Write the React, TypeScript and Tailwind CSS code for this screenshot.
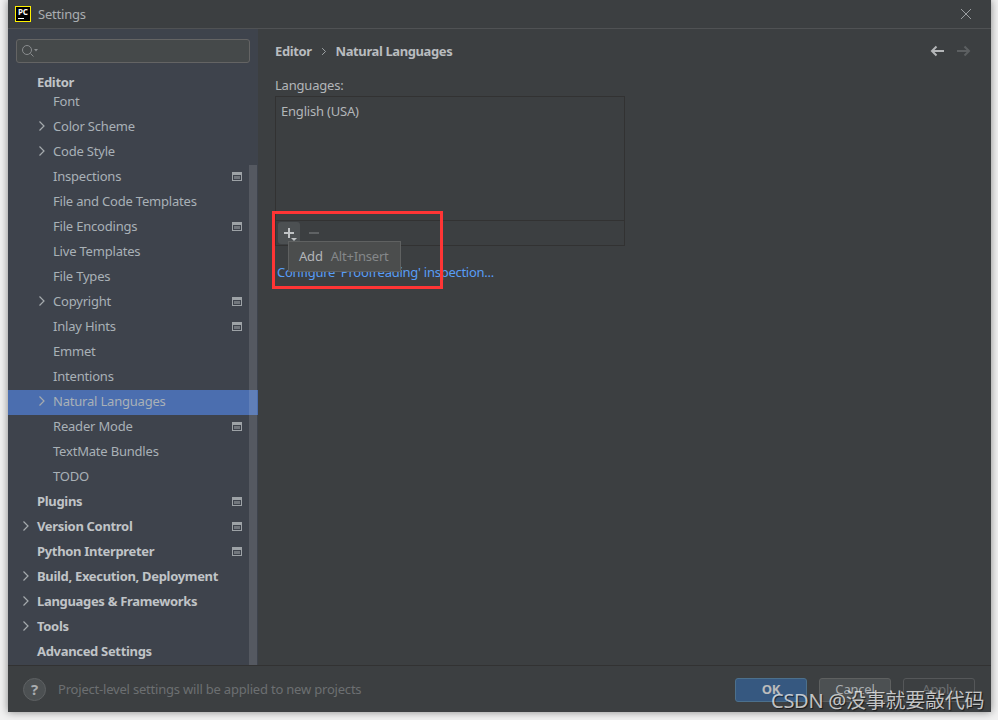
import React from "react";

type Row = {
  label: string;
  bold?: boolean;
  child?: boolean;
  arrow?: boolean;
  project?: boolean;
  selected?: boolean;
};

const rows: Row[] = [
  { label: "Color Scheme", child: true, arrow: true },
  { label: "Code Style", child: true, arrow: true },
  { label: "Inspections", child: true, project: true },
  { label: "File and Code Templates", child: true },
  { label: "File Encodings", child: true, project: true },
  { label: "Live Templates", child: true },
  { label: "File Types", child: true },
  { label: "Copyright", child: true, arrow: true, project: true },
  { label: "Inlay Hints", child: true, project: true },
  { label: "Emmet", child: true },
  { label: "Intentions", child: true },
  { label: "Natural Languages", child: true, arrow: true, selected: true },
  { label: "Reader Mode", child: true, project: true },
  { label: "TextMate Bundles", child: true },
  { label: "TODO", child: true },
  { label: "Plugins", bold: true, project: true },
  { label: "Version Control", bold: true, arrow: true, project: true },
  { label: "Python Interpreter", bold: true, project: true },
  { label: "Build, Execution, Deployment", bold: true, arrow: true },
  { label: "Languages & Frameworks", bold: true, arrow: true },
  { label: "Tools", bold: true, arrow: true },
  { label: "Advanced Settings", bold: true },
];

const Chevron = ({ className }: { className?: string }) => (
  <svg viewBox="0 0 8 12" className={className} fill="none" stroke="currentColor" strokeWidth="1.2">
    <path d="M1.5 1.5 6 6l-4.5 4.5" />
  </svg>
);

const ProjectIcon = () => (
  <svg viewBox="0 0 10 9" className="w-[10px] h-[9px] text-[#9da2a6]">
    <path fill="currentColor" fillRule="evenodd" d="M0 0h10v9H0zM1 3v5h8V3z" />
    <rect x="2" y="4" width="6" height="3" fill="currentColor" opacity="0.55" />
  </svg>
);

const TreeRow = ({ row }: { row: Row }) => (
  <div
    className={`h-[25px] pb-[2px] flex items-center relative ${
      row.selected ? "bg-[#4b6eaf]" : ""
    } ${row.child ? "pl-[45px]" : "pl-[29px]"}`}
  >
    {row.arrow && (
      <Chevron
        className={`absolute top-[5px] w-2 h-3 text-[#a6abae] ${row.child ? "left-[30px]" : "left-[14px]"}`}
      />
    )}
    <span className={row.bold ? "font-bold tracking-[-0.32px] text-[#c0c4c7]" : "text-[#a9b1b7]"}>{row.label}</span>
    {row.project && (
      <span className="absolute left-[224px] top-[7px] flex">
        <ProjectIcon />
      </span>
    )}
  </div>
);

const Button = ({ label, className }: { label: string; className: string }) => (
  <div className={`w-[72px] h-6 rounded-[3px] border flex items-center justify-center ${className}`}>{label}</div>
);

export default function App() {
  return (
    <div
      className="w-[998px] h-[720px] bg-[#f1f1f1] pl-2 pr-[7px] pb-2 overflow-hidden relative text-[13px] tracking-[-0.2px] leading-none"
      style={{ fontFamily: '"Noto Sans", "Liberation Sans", sans-serif' }}
    >
      <div className="h-full flex flex-col bg-[#3c3f41] shadow-[0_0_8px_rgba(0,0,0,0.45)]">
        {/* title bar */}
        <div className="h-[29px] shrink-0 flex items-center pl-[7px] pr-[19px] border-b border-[#505254] text-[#a9adb0]">
          <div className="w-4 h-4 border border-[#fff200] bg-black flex flex-col items-start pl-[2px] pt-[1px] mr-[7px]">
            <span className="text-[8px] leading-[8px] font-bold text-white">PC</span>
            <span className="w-[6px] h-px bg-white mt-[2px]" />
          </div>
          <span>Settings</span>
          <svg viewBox="0 0 12 12" className="w-3 h-3 ml-auto text-[#9a9da0]" fill="none" stroke="currentColor">
            <path d="m1 1 10 10M11 1 1 11" />
          </svg>
        </div>

        {/* body */}
        <div className="flex-1 flex min-h-0">
          <aside className="w-[250px] shrink-0 bg-[#3e434c] relative overflow-hidden">
            <div className="mx-2 mt-[10px] h-6 w-[234px] bg-[#45494a] border border-[#646464] rounded-[3px] flex items-center pl-1 text-[#8a8d8f]">
              <svg viewBox="0 0 18 14" className="w-[18px] h-[14px]" fill="none" stroke="currentColor">
                <circle cx="6" cy="6" r="4.5" />
                <path d="m9.5 9.5 3 3" />
                <path d="M13 5h4l-2 2.5z" fill="currentColor" stroke="none" />
              </svg>
            </div>
            <div className="mt-[9px] h-[20px] flex items-center pl-[29px] font-bold tracking-[-0.32px] text-[#c0c4c7]">Editor</div>
            <div className="h-[19px] flex items-center pl-[45px] text-[#a9b1b7]">Font</div>
            <div className="mt-[4px]">
              {rows.map((row) => (
                <TreeRow key={row.label} row={row} />
              ))}
            </div>
            <div className="absolute right-px top-[136px] bottom-0 w-2 bg-[#ffffff1f]" />
          </aside>

          <main className="flex-1 pl-[17px] pr-[20px] pt-[14px] text-[#b3b6b9]">
            <div className="h-4 flex items-center font-bold tracking-[-0.4px] text-[#b9bcbf]">
              <span>Editor</span>
              <Chevron className="w-[6px] h-[9px] mx-[9px] text-[#a6abae]" />
              <span>Natural Languages</span>
              <svg viewBox="0 0 14 12" className="w-[14px] h-3 ml-auto text-[#b4b6b8]" fill="none" stroke="currentColor" strokeWidth="2">
                <path d="M14 6H2M6.5 1.5 2 6l4.5 4.5" />
              </svg>
              <svg viewBox="0 0 14 12" className="w-[14px] h-3 ml-[13px] text-[#5c5f61]" fill="none" stroke="currentColor" strokeWidth="2">
                <path d="M0 6h12M7.5 1.5 12 6l-4.5 4.5" />
              </svg>
            </div>
            <div className="mt-[18px] h-4 flex items-center">Languages:</div>
            <div className="mt-[3px] w-[350px] h-[150px] border border-[#323232] flex flex-col">
              <div className="flex-1 pl-[5px] pt-[8px]">English (USA)</div>
              <div className="h-[25px] border-t border-[#323232] flex items-center pl-[2px] gap-[9px]">
                <div className="w-[22px] h-[22px] rounded-[3px] bg-[#4c5052] relative flex items-center justify-center">
                  <svg viewBox="0 0 10 10" className="w-[10px] h-[10px] text-[#c0c3c5]" fill="none" stroke="currentColor" strokeWidth="2">
                    <path d="M5 0v10M0 5h10" />
                  </svg>
                </div>
                <span className="w-[10px] h-[2px] bg-[#5f6264]" />
              </div>
            </div>
            <div className="mt-[20px] ml-[2px] tracking-[-0.26px] text-[#589df6]">Configure 'Proofreading' inspection...</div>
          </main>
        </div>

        {/* footer */}
        <div className="h-[47px] shrink-0 border-t border-[#323232] flex items-center pl-[15px] pr-[16px] pt-[1px]">
          <div className="w-[23px] h-[23px] rounded-full bg-[#4c5052] border border-[#5e6163] flex items-center justify-center font-bold text-[15px] text-[#a9adb0]">
            ?
          </div>
          <span className="ml-[12px] text-[#6c6f71]">Project-level settings will be applied to new projects</span>
          <div className="ml-auto flex gap-3">
            <Button label="OK" className="bg-[#365880] border-[#4c708c] text-[#bbbbbb] font-bold" />
            <Button label="Cancel" className="bg-[#4c5052] border-[#5e6060] text-[#a9adb0]" />
            <Button label="Apply" className="border-[#555759] text-[#6c6f71]" />
          </div>
        </div>
      </div>

      {/* tooltip */}
      <div className="absolute left-[288px] top-[241px] w-[113px] h-[31px] bg-[#4b4d4d] border border-[#5f6161] flex items-center pl-[10px] z-10">
        <span className="text-[#b3b6b9]">Add</span>
        <span className="ml-2 text-[#85888a]">Alt+Insert</span>
      </div>
      <span className="absolute left-[291px] top-[238px] w-0 h-0 border-x-[3px] border-x-transparent border-t-[3px] border-t-[#c0c3c5] z-20" />

      {/* screenshot annotation */}
      <div className="absolute left-[272px] top-[211px] w-[171px] h-[78px] border-[3px] border-[#ff3535] z-20" />
      <div
        className="absolute left-[771px] top-[689px] text-[20px] tracking-[-0.25px] leading-6 text-[#ffffffb8] z-20 [text-shadow:1px_1px_1px_rgba(0,0,0,0.6)] whitespace-nowrap"
        style={{ fontFamily: '"Noto Sans", "Noto Sans CJK SC", sans-serif' }}
      >
        CSDN @没事就要敲代码
      </div>
    </div>
  );
}
